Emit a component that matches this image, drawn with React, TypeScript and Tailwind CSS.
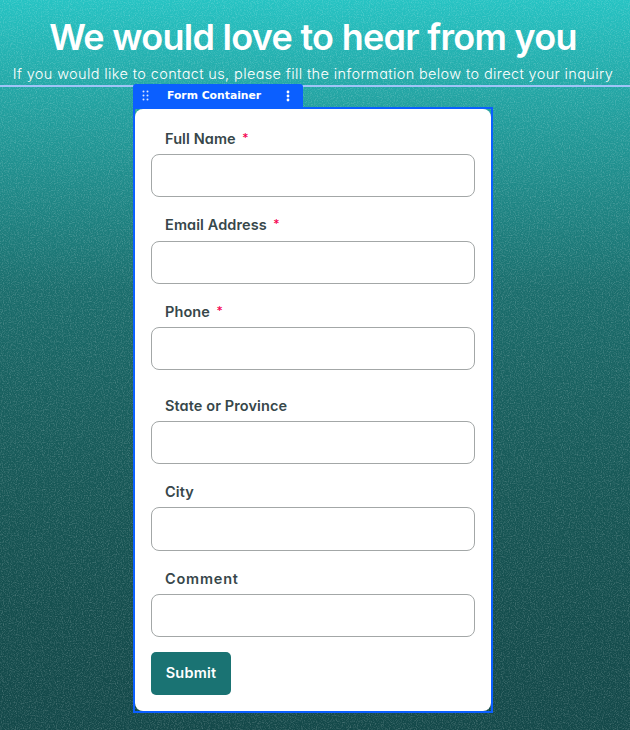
import React from "react";

type FieldProps = { label: string; required?: boolean; spacing?: string; tracking?: string; input?: string };

function Field({ label, required = false, spacing = "mb-[18px]", tracking = "tracking-[0.1px]", input = "mt-[5px] h-[43px]" }: FieldProps) {
  return (
    <label className={`block ${spacing}`}>
      <span className="flex h-5 items-center pl-[14px] text-[14.5px] font-semibold leading-5 text-[#37474a]">
        <span className={tracking}>{label}</span>
        {required && <span className="ml-[7px] h-[22px] font-['DejaVu_Sans'] text-[10px] font-semibold text-[#f5004f]">*</span>}
      </span>
      <input className={`block w-full rounded-[8px] border border-[#a3a7a7] bg-white px-3 text-sm outline-none ${input}`} />
    </label>
  );
}

function GripIcon() {
  return (
    <svg className="h-[11px] w-[7px]" viewBox="0 0 7 11" fill="#dce8ff">
      {[1.5, 5.5, 9.5].map((y) => (
        <React.Fragment key={y}>
          <circle cx="1.5" cy={y} r="1" />
          <circle cx="5.5" cy={y} r="1" />
        </React.Fragment>
      ))}
    </svg>
  );
}

function MoreIcon() {
  return (
    <svg className="h-[12px] w-[4px]" viewBox="0 0 4 12" fill="white">
      <circle cx="2" cy="2" r="1.4" />
      <circle cx="2" cy="6" r="1.4" />
      <circle cx="2" cy="10" r="1.4" />
    </svg>
  );
}

export default function App() {
  return (
    <div className="relative isolate h-[730px] w-[630px] overflow-hidden bg-[linear-gradient(180deg,#26c3c3_0px,#23a3a2_100px,#208c8b_180px,#1b6e6d_290px,#19605f_400px,#175655_510px,#154e4e_620px,#14494a_730px)] font-[Inter,sans-serif] [font-feature-settings:'cv11'_1]">
      <svg className="absolute inset-0 -z-10 h-full w-full opacity-40" aria-hidden="true">
        <filter id="grain" x="0" y="0" width="100%" height="100%" colorInterpolationFilters="sRGB">
          <feTurbulence type="fractalNoise" baseFrequency="0.85" numOctaves="2" seed="4" />
          <feColorMatrix values="0 0 0 0 1  0 0 0 0 1  0 0 0 0 1  1.2 0 0 0 -0.53" />
        </filter>
        <rect width="100%" height="100%" filter="url(#grain)" />
      </svg>

      <header className="flex h-[87px] flex-col items-center border-b-2 border-[#a0c4f8] pr-1 text-white">
        <h1 className="mt-[17px] whitespace-nowrap text-[36px] font-[560] leading-[40px] tracking-[-0.72px]">We would love to hear from you</h1>
        <p className="mt-[7px] whitespace-nowrap text-[14.5px] font-[350] leading-5 tracking-[0.37px]">
          If you would like to contact us, please fill the information below to direct your inquiry
        </p>
      </header>

      <main className="relative -mt-[3px] ml-[133px] w-[360px]">
        <div className="flex h-[23px] w-[170px] items-center rounded-t-[3px] bg-[#0b5fff] pl-[9px]">
          <GripIcon />
          <span className="ml-[18px] w-[96px] whitespace-nowrap font-['DejaVu_Sans'] text-[10.8px] font-bold leading-[13px] text-white">Form Container</span>
          <span className="ml-[23px]"><MoreIcon /></span>
        </div>
        <div className="h-[606px] border-2 border-[#0b5fff]">
          <form className="h-full rounded-[8px] bg-white px-4 pt-5" onSubmit={(e) => e.preventDefault()}>
            <Field label="Full Name" required />
            <Field label="Email Address" required input="mt-[6px] h-[43px]" />
            <Field label="Phone" required spacing="mb-[26px]" />
            <Field label="State or Province" />
            <Field label="City" input="mt-[5px] h-[44px]" />
            <Field label="Comment" spacing="mb-[15px]" tracking="tracking-[0.8px]" />
            <button className="block h-[43px] w-20 rounded-[5px] bg-[#1a7373] pb-[2px] text-[14.5px] font-semibold tracking-[0.2px] text-white">Submit</button>
          </form>
        </div>
      </main>
    </div>
  );
}
